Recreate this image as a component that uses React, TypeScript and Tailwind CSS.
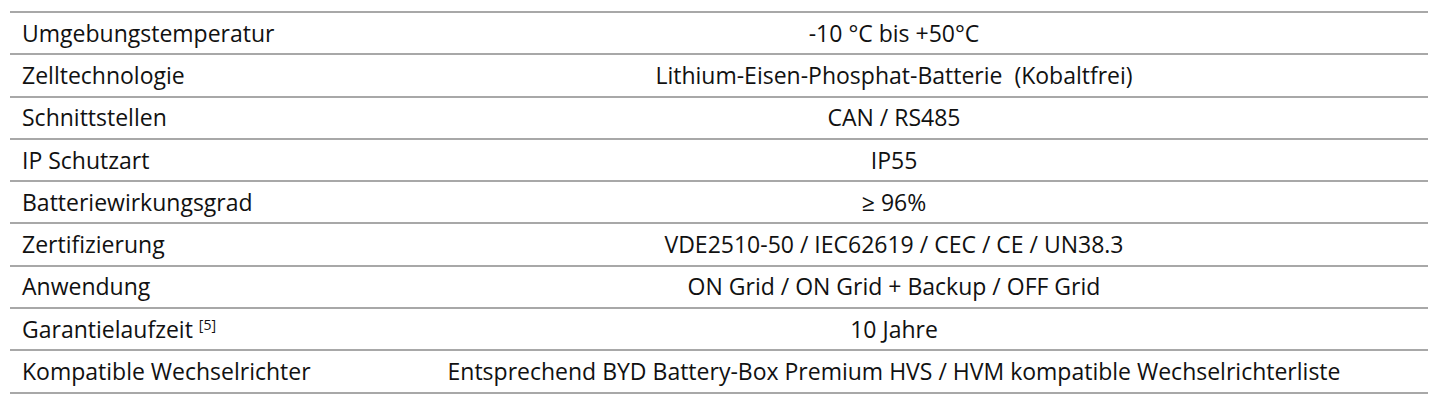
import React from "react";

const rows: [React.ReactNode, string][] = [
  ["Umgebungstemperatur", "-10 °C bis +50°C"],
  ["Zelltechnologie", "Lithium-Eisen-Phosphat-Batterie  (Kobaltfrei)"],
  ["Schnittstellen", "CAN / RS485"],
  ["IP Schutzart", "IP55"],
  ["Batteriewirkungsgrad", "≥ 96%"],
  ["Zertifizierung", "VDE2510-50 / IEC62619 / CEC / CE / UN38.3"],
  ["Anwendung", "ON Grid / ON Grid + Backup / OFF Grid"],
  [
    <>
      Garantielaufzeit <span className="text-[14px] relative -top-[8px]">[5]</span>
    </>,
    "10 Jahre",
  ],
  ["Kompatible Wechselrichter", "Entsprechend BYD Battery-Box Premium HVS / HVM kompatible Wechselrichterliste"],
];

export default function App() {
  return (
    <div className="bg-white w-[1445px] h-[404px] pt-[11px] pl-[10px]" style={{ fontFamily: '"Open Sans", sans-serif' }}>
      <div className="w-[1418px] border-b-2 border-[#a8a8a8] text-[23px] text-[#111]">
        {rows.map(([a, b], i) => (
          <div key={i} className="flex h-[42.3px] items-center border-t-2 border-[#a8a8a8] whitespace-pre leading-none">
            <div className="w-[350px] pl-[12px]">{a}</div>
            <div className="flex-1 text-center">{b}</div>
          </div>
        ))}
      </div>
    </div>
  );
}
